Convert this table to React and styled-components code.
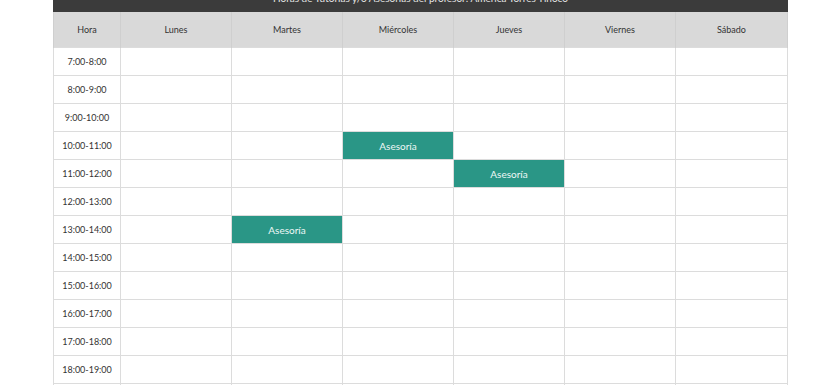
import React from "react";
import styled, { createGlobalStyle } from "styled-components";

const GlobalStyle = createGlobalStyle`
  html, body {
    margin: 0;
    padding: 0;
    background: #ffffff;
    overflow: hidden;
  }
  body {
    font-family: Lato, "Open Sans", sans-serif;
  }
`;

const days = ["Lunes", "Martes", "Miércoles", "Jueves", "Viernes", "Sábado"];

const hours = [
  "7:00-8:00",
  "8:00-9:00",
  "9:00-10:00",
  "10:00-11:00",
  "11:00-12:00",
  "12:00-13:00",
  "13:00-14:00",
  "14:00-15:00",
  "15:00-16:00",
  "16:00-17:00",
  "17:00-18:00",
  "18:00-19:00",
  "19:00-20:00",
  "20:00-21:00",
];

// hour index -> day index
const sessions = {
  3: 2,
  4: 3,
  6: 1,
};

const App = () => {
  return (
    <>
      <GlobalStyle />
      <Page>
        <Schedule>
          <TitleBar>
            Horas de Tutorías y/o Asesorías del profesor: América Torres Tinoco
          </TitleBar>
          <Table>
            <colgroup>
              <col style={{ width: 67 }} />
              {days.map((d, i) => (
                <col key={d} style={{ width: i === 5 ? 112 : 111 }} />
              ))}
            </colgroup>
            <thead>
              <tr>
                <HeadCell>Hora</HeadCell>
                {days.map((d) => (
                  <HeadCell key={d}>{d}</HeadCell>
                ))}
              </tr>
            </thead>
            <tbody>
              {hours.map((h, row) => (
                <tr key={h}>
                  <HourCell>{h}</HourCell>
                  {days.map((d, col) => (
                    <Cell key={d} $busy={sessions[row] === col}>
                      {sessions[row] === col ? "Asesoría" : ""}
                    </Cell>
                  ))}
                </tr>
              ))}
            </tbody>
          </Table>
        </Schedule>
      </Page>
    </>
  );
};

export default App;

const Page = styled.div`
  width: 840px;
  height: 385px;
  overflow: hidden;
  padding-left: 53px;
  box-sizing: border-box;
`;

const Schedule = styled.div`
  width: 735px;
  margin-top: -9px;
`;

const TitleBar = styled.div`
  height: 21px;
  background: #3b3b3b;
  color: #e6e6e6;
  font-size: 10px;
  line-height: 12px;
  text-align: center;
  box-sizing: border-box;
  padding-top: 1px;
`;

const Table = styled.table`
  width: 735px;
  table-layout: fixed;
  border-collapse: collapse;
  font-size: 9px;
  color: #333333;
`;

const HeadCell = styled.th`
  height: 35px;
  padding: 0;
  background: #d9d9d9;
  font-weight: 400;
  text-align: center;
  border-right: 1px solid #cfcfcf;
  border-left: 1px solid #cfcfcf;
  color: #333333;
`;

const Cell = styled.td`
  height: 27px;
  padding: 0;
  text-align: center;
  border: 1px solid #dcdcdc;
  background: ${(p) => (p.$busy ? "#2a9686" : "#ffffff")};
  color: ${(p) => (p.$busy ? "#eef8f6" : "#333333")};
  font-size: 10px;
`;

const HourCell = styled(Cell)`
  font-size: 9px;
  color: #333333;
`;
